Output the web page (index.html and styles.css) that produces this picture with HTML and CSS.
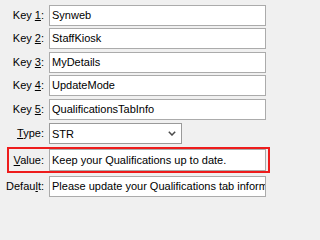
FILE: index.html
```html
<!DOCTYPE html>
<html>
<head>
<meta charset="utf-8">
<link rel="stylesheet" href="styles.css">
</head>
<body>
<div class="form">
  <label class="lbl">Key <u>1</u>:</label><div class="field">Synweb</div>
  <label class="lbl">Key <u>2</u>:</label><div class="field">StaffKiosk</div>
  <label class="lbl">Key <u>3</u>:</label><div class="field">MyDetails</div>
  <label class="lbl">Key <u>4</u>:</label><div class="field">UpdateMode</div>
  <label class="lbl">Key <u>5</u>:</label><div class="field">QualificationsTabInfo</div>
  <label class="lbl"><u>T</u>ype:</label>
  <div class="select"><span>STR</span><svg class="chev" width="8" height="5" viewBox="0 0 8 5"><path d="M0.8 0.8 L4 4 L7.2 0.8" fill="none" stroke="#4a4a4a" stroke-width="1.5"/></svg></div>
  <div class="highlight">
    <label class="lbl"><u>V</u>alue:</label><div class="field tall">Keep your Qualifications up to date.</div>
  </div>
  <label class="lbl">Defau<u>l</u>t:</label><div class="field">Please update your Qualifications tab information</div>
</div>
</body>
</html>
```
FILE: styles.css
```css
html, body {
  margin: 0;
  padding: 0;
  background: #f0f0f0;
}
body {
  font-family: "Liberation Sans", Arial, sans-serif;
  font-size: 11px;
  color: #000;
  width: 271px;
  height: 202px;
  overflow: hidden;
}
.form {
  display: grid;
  grid-template-columns: 44px 217px;
  grid-template-rows: 23px 24px 23px 24px 24px 24px 29px 21px;
  column-gap: 5px;
  padding-top: 5px;
  align-items: start;
}
.lbl {
  height: 21px;
  line-height: 21px;
  text-align: right;
  white-space: nowrap;
}
.lbl u {
  text-underline-offset: 1px;
}
.field {
  box-sizing: border-box;
  height: 21px;
  line-height: 19px;
  border: 1px solid #ababab;
  background: #fff;
  padding: 0 2px;
  white-space: nowrap;
  overflow: hidden;
}
.field.tall {
  height: 22px;
  line-height: 20px;
}
.select {
  box-sizing: border-box;
  width: 133px;
  height: 21px;
  border: 1px solid #9a9a9a;
  background: #fff;
  padding: 0 5px 0 2px;
  display: flex;
  align-items: center;
  justify-content: space-between;
}
.chev {
  display: block;
}
.highlight {
  grid-column: 1 / -1;
  margin-left: 7px;
  box-sizing: border-box;
  width: 263px;
  height: 26px;
  border: 2px solid #ee1c1c;
  padding-right: 2px;
  display: grid;
  grid-template-columns: 35px 217px;
  column-gap: 5px;
  align-items: start;
}
.highlight .lbl {
  height: 22px;
  line-height: 22px;
}
```
